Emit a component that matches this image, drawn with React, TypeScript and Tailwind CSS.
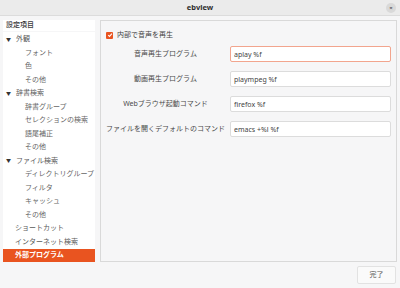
import { useState } from "react";

const FONT = { fontFamily: '"Noto Sans", "Noto Sans CJK JP", sans-serif' };

type Item = { label: string; level: 0 | 1; arrow?: boolean; selected?: boolean };

const items: Item[] = [
  { label: "外観", level: 0, arrow: true },
  { label: "フォント", level: 1 },
  { label: "色", level: 1 },
  { label: "その他", level: 1 },
  { label: "辞書検索", level: 0, arrow: true },
  { label: "辞書グループ", level: 1 },
  { label: "セレクションの検索", level: 1 },
  { label: "語尾補正", level: 1 },
  { label: "その他", level: 1 },
  { label: "ファイル検索", level: 0, arrow: true },
  { label: "ディレクトリグループ", level: 1 },
  { label: "フィルタ", level: 1 },
  { label: "キャッシュ", level: 1 },
  { label: "その他", level: 1 },
  { label: "ショートカット", level: 0 },
  { label: "インターネット検索", level: 0 },
  { label: "外部プログラム", level: 0, selected: true },
];

const fields = [
  { label: "音声再生プログラム", value: "aplay %f" },
  { label: "動画再生プログラム", value: "plaympeg %f" },
  { label: "Webブラウザ起動コマンド", value: "firefox %f" },
  { label: "ファイルを開くデフォルトのコマンド", value: "emacs +%l %f" },
];

function Sidebar() {
  return (
    <div className="flex w-[92px] flex-col gap-px">
      <div className="flex h-[12px] items-center bg-white pl-[3px] text-[7px] font-medium text-[#3a3a3a]">
        設定項目
      </div>
      <div className="flex flex-1 flex-col bg-white pt-px">
        {items.map((it, i) => (
          <div
            key={i}
            className={
              it.selected
                ? "flex h-[13.5px] items-center bg-[#e95420] pl-[12px] text-[7px] font-bold text-white"
                : it.level === 0
                  ? "flex h-[13.5px] items-center pl-[12px] text-[7px] text-[#5a5a5a]"
                  : "flex h-[13.5px] items-center pl-[22px] text-[7px] text-[#666]"
            }
          >
            {it.arrow && (
              <span className="-ml-[9px] mr-[5px] text-[5px] text-[#333]">▼</span>
            )}
            {it.label}
          </div>
        ))}
      </div>
    </div>
  );
}

export default function App() {
  const [internal, setInternal] = useState(true);
  const [vals, setVals] = useState(fields.map((f) => f.value));

  return (
    <div className="flex h-[288px] w-[400px] flex-col overflow-hidden bg-[#f6f6f7]" style={FONT}>
      <div className="relative flex h-[16px] items-center justify-center border-b border-[#dcdcdc] bg-[#ebebeb]">
        <span className="text-[7.5px] font-bold text-[#2e2e2e]">ebview</span>
        <div className="absolute right-[4px] top-[3px] flex h-[10px] w-[10px] items-center justify-center rounded-full bg-[#d9d9d9] text-[6px] leading-none text-[#333]">
          ×
        </div>
      </div>

      <div className="flex flex-1 flex-col px-[3px] pt-[4px]">
        <div className="flex h-[242px] gap-[5px]">
          <Sidebar />
          <div className="flex flex-1 flex-col border border-[#d9d9d9] bg-[#f6f6f7] pl-[5px] pr-[5px] pt-[9px]">
            <label className="flex h-[10px] items-center gap-[4px] text-[7px] text-[#444]">
              <span
                onClick={() => setInternal(!internal)}
                className="flex h-[7px] w-[7px] items-center justify-center rounded-[1px] bg-[#e95420]"
              >
                {internal && (
                  <svg width="6" height="6" viewBox="0 0 10 10">
                    <path d="M2 5.2 L4.2 7.4 L8.2 2.8" fill="none" stroke="white" strokeWidth="1.8" />
                  </svg>
                )}
              </span>
              内部で音声を再生
            </label>
            <div className="mt-[6px] flex flex-col gap-[9px]">
              {fields.map((f, i) => (
                <div key={i} className="flex items-center">
                  <div className="w-[119px] text-center text-[7px] text-[#4a4a4a]">{f.label}</div>
                  <input
                    value={vals[i]}
                    onChange={(e) => {
                      const v = vals.slice();
                      v[i] = e.target.value;
                      setVals(v);
                    }}
                    className={
                      i === 0
                        ? "ml-[5px] h-[16px] w-[161px] rounded-[2px] border border-[#f2a58e] bg-white px-[3px] text-[7px] text-[#444] outline-none"
                        : "ml-[5px] h-[16px] w-[161px] rounded-[2px] border border-[#dcdcdc] bg-white px-[3px] text-[7px] text-[#444] outline-none"
                    }
                  />
                </div>
              ))}
            </div>
          </div>
        </div>
        <div className="mt-[4px] flex justify-end pr-px">
          <button className="h-[18px] w-[39px] rounded-[2px] border border-[#e2e2e2] bg-[#fafafa] text-[7px] text-[#555]">
            完了
          </button>
        </div>
      </div>
    </div>
  );
}
